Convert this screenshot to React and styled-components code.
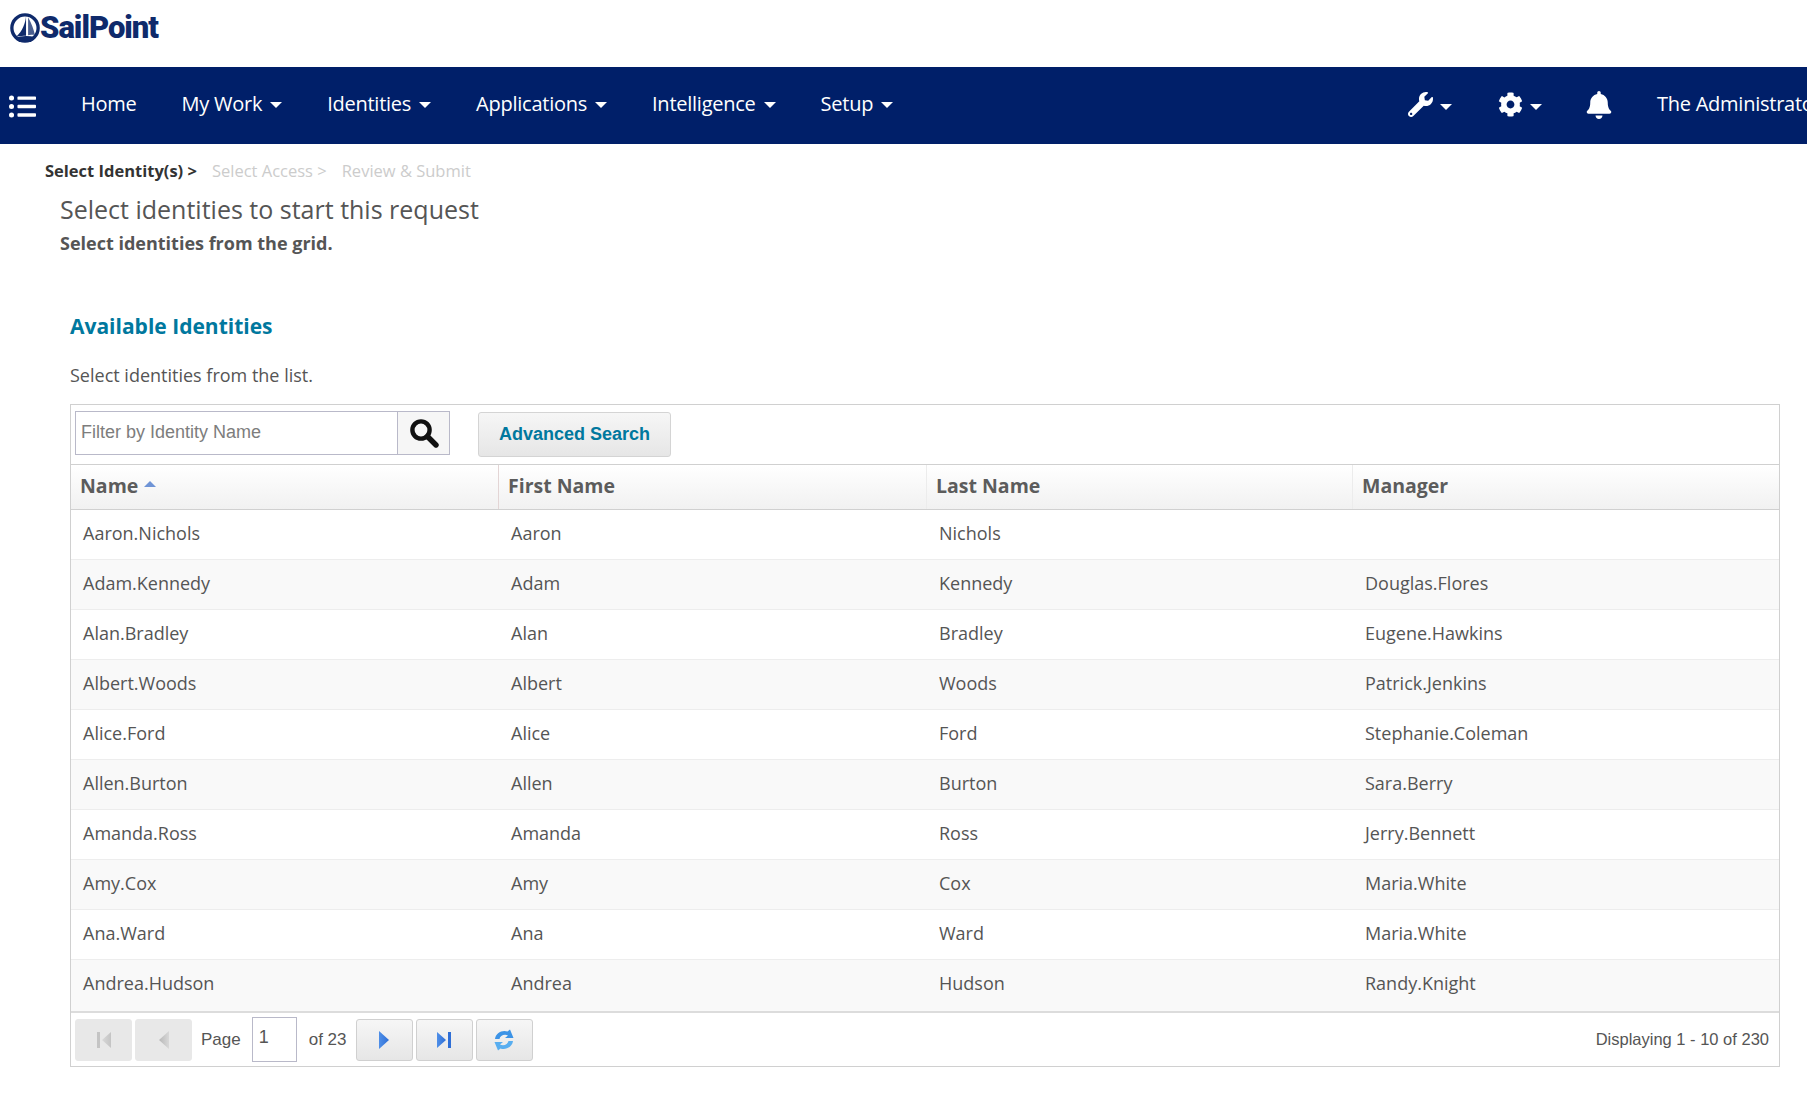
import React from "react";
import styled, { createGlobalStyle } from "styled-components";
import { FaListUl, FaWrench, FaCog, FaBell } from "react-icons/fa";

const GlobalStyle = createGlobalStyle`
  html, body {
    margin: 0;
    padding: 0;
    background: #fff;
    font-family: "Open Sans", "Liberation Sans", sans-serif;
    overflow: hidden;
  }
`;

const Page = styled.div`
  width: 1807px;
  height: 1093px;
  overflow: hidden;
`;

const Brand = styled.div`
  height: 67px;
  display: flex;
  align-items: flex-start;
  padding: 13px 0 0 10px;
  box-sizing: border-box;
`;

const LogoText = styled.span`
  font-family: "Roboto", "Liberation Sans", sans-serif;
  font-weight: 900;
  font-size: 31px;
  line-height: 30px;
  letter-spacing: -1px;
  color: #0f2a6b;
`;

const NavBar = styled.nav`
  height: 77px;
  background: #001f69;
  display: flex;
  align-items: center;
  color: #fff;
  white-space: nowrap;
  font-size: 20px;
  letter-spacing: -0.25px;
  padding: 0 0 5px 9px;
  box-sizing: border-box;
`;

const Burger = styled.span`
  display: flex;
  font-size: 27px;
  margin: 7px 45px 0 0;
`;

const NavItem = styled.span`
  display: flex;
  align-items: center;
  gap: 8px;
  margin-right: 45px;
`;

const Caret = styled.span`
  width: 0;
  height: 0;
  border-left: 6px solid transparent;
  border-right: 6px solid transparent;
  border-top: 6px solid #fff;
  margin-top: 4px;
`;

const NavIcons = styled.div`
  margin-left: auto;
  display: flex;
  align-items: center;
  font-size: 25px;
  flex-shrink: 0;
  width: 399px;
  overflow: hidden;
  box-sizing: border-box;
`;

const IconItem = styled.span`
  display: flex;
  align-items: center;
  gap: 7px;
  margin-right: ${(p) => p.$space}px;
  font-size: ${(p) => p.$size || 25}px;
  padding-top: 3px;
`;

const UserName = styled.span`
  font-size: 20px;
`;

const Crumbs = styled.div`
  display: flex;
  gap: 15px;
  font-size: 16.5px;
  line-height: 22px;
  padding: 16px 0 0 45px;
`;

const Crumb = styled.span`
  color: ${(p) => (p.$active ? "#333" : "#ccc")};
  font-weight: ${(p) => (p.$active ? 700 : 400)};
`;

const Heading = styled.div`
  margin: 10px 0 0 60px;
  font-size: 25px;
  line-height: 34px;
  color: #555;
`;

const SubHeading = styled.div`
  margin: 5px 0 0 60px;
  font-size: 18px;
  line-height: 24px;
  font-weight: 700;
  color: #555;
`;

const Section = styled.div`
  margin: 0 27px 0 70px;
`;

const SectionTitle = styled.div`
  margin-top: 56px;
  font-size: 21px;
  line-height: 30px;
  font-weight: 700;
  color: #00789e;
`;

const SectionHint = styled.div`
  margin-top: 22px;
  font-size: 18px;
  line-height: 24px;
  color: #555;
`;

const Panel = styled.div`
  margin-top: 17px;
  border: 1px solid #d0d0d0;
  height: 663px;
  box-sizing: border-box;
  display: flex;
  flex-direction: column;
`;

const Toolbar = styled.div`
  height: 59px;
  flex: none;
  box-sizing: border-box;
  display: flex;
  align-items: flex-start;
  padding: 6px 0 0 4px;
`;

const SearchBox = styled.div`
  display: flex;
  flex: none;
  width: 375px;
  height: 44px;
  box-sizing: border-box;
  border: 1px solid #b9b9c9;
`;

const SearchInput = styled.input`
  flex: 1;
  min-width: 0;
  border: none;
  outline: none;
  padding: 0 5px 2px;
  font-family: "Liberation Sans", Arial, sans-serif;
  font-size: 18px;
  color: #333;
  &::placeholder {
    color: #7d7d7d;
    opacity: 1;
  }
`;

const SearchButton = styled.span`
  width: 51px;
  border-left: 1px solid #b9b9c9;
  background: #f6f6f6;
  display: flex;
  align-items: center;
  justify-content: center;
`;

const AdvancedButton = styled.button`
  margin: 1px 0 0 28px;
  width: 193px;
  height: 45px;
  border: 1px solid #d4d4d4;
  border-radius: 3px;
  background: linear-gradient(#f6f6f6, #e6e6e6);
  color: #00789e;
  font-family: "Liberation Sans", Arial, sans-serif;
  font-weight: 700;
  font-size: 18px;
  padding: 0;
`;

const Columns = styled.div`
  display: grid;
  grid-template-columns: 428px 428px 426px 1fr;
`;

const HeaderRow = styled(Columns)`
  height: 46px;
  flex: none;
  box-sizing: border-box;
  border-top: 1px solid #d0d0d0;
  border-bottom: 1px solid #d0d0d0;
  background: linear-gradient(#ffffff, #f1f1f1);
`;

const HeaderCell = styled.div`
  display: flex;
  align-items: center;
  gap: 6px;
  padding: 0 0 4px 9px;
  font-size: 19.5px;
  font-weight: 700;
  color: #5c5c5c;
  border-right: 1px solid ${(p) => p.$rule || "transparent"};
`;

const SortArrow = styled.span`
  width: 0;
  height: 0;
  border-left: 6px solid transparent;
  border-right: 6px solid transparent;
  border-bottom: 6px solid #6f94d6;
  margin-bottom: 3px;
`;

const Body = styled.div`
  flex: 1;
  background: #f9f9f9;
`;

const Row = styled(Columns)`
  height: 50px;
  box-sizing: border-box;
  background: ${(p) => (p.$odd ? "#f9f9f9" : "#fff")};
  border-bottom: 1px solid ${(p) => (p.$last ? "transparent" : "#ededed")};
  align-items: center;
  font-size: 18px;
  color: #555;
`;

const Cell = styled.div`
  padding: 0 0 4px 12px;
`;

const Footer = styled.div`
  height: 55px;
  flex: none;
  box-sizing: border-box;
  border-top: 2px solid #dcdcdc;
  display: flex;
  align-items: center;
  padding: 0 10px 0 4px;
  font-family: "Liberation Sans", Arial, sans-serif;
  font-size: 17px;
  color: #555;
`;

const PagerButton = styled.span`
  width: 57px;
  height: 42px;
  flex: none;
  box-sizing: border-box;
  border-radius: 3px;
  border: 1px solid ${(p) => (p.$off ? "#e8e8e8" : "#d0d0d0")};
  background: ${(p) => (p.$off ? "#e8e8e8" : "linear-gradient(#f6f6f6, #e6e6e6)")};
  display: flex;
  align-items: center;
  justify-content: center;
  margin-right: 3px;
`;

const PageLabel = styled.span`
  margin: 0 ${(p) => p.$right}px 0 ${(p) => p.$left}px;
`;

const PageInput = styled.span`
  width: 45px;
  height: 45px;
  box-sizing: border-box;
  border: 1px solid #b9b9c9;
  padding: 9px 0 0 6px;
  font-size: 18px;
  line-height: 20px;
`;

const Displaying = styled.span`
  margin-left: auto;
  font-size: 16.5px;
`;

const Logo = () => (
  <svg width="30" height="30" viewBox="0 0 29 29">
    <circle cx="14.5" cy="14.5" r="12.7" fill="none" stroke="#0f2a6b" strokeWidth="3.2" />
    <path d="M15.5 3 C15 10 12 18 6 23 C10 22 13 22 15.5 22 Z" fill="#0f2a6b" />
    <path d="M17.5 4 C21 10 23 16 24 21 C22 21 19 21 17.5 21.5 Z" fill="#0f2a6b" opacity="0.75" />
    <path d="M5 24 Q14 20.5 25 23.5 L20 28 H9 Z" fill="#0f2a6b" />
  </svg>
);

const SearchGlyph = () => (
  <svg width="30" height="30" viewBox="0 0 30 30">
    <circle cx="12" cy="12" r="8.6" fill="none" stroke="#111" strokeWidth="4.4" />
    <line x1="18.5" y1="18.5" x2="27" y2="27" stroke="#111" strokeWidth="5.4" strokeLinecap="round" />
  </svg>
);

const Tri = ({ dir, bar, color, light }) => {
  const id = `g-${dir}-${bar ? 1 : 0}`;
  return (
    <svg width="16" height="18" viewBox="0 0 16 18">
      <defs>
        <linearGradient id={id} x1="0" x2="1" y1="0" y2="0">
          <stop offset="0" stopColor={light} />
          <stop offset="1" stopColor={color} />
        </linearGradient>
      </defs>
      {dir === "left" ? (
        <path d={bar ? "M15 1 V17 L6 9 Z" : "M13 0 V18 L3 9 Z"} fill={`url(#${id})`} />
      ) : (
        <path d={bar ? "M1 1 V17 L10 9 Z" : "M3 0 V18 L13 9 Z"} fill={`url(#${id})`} />
      )}
      {bar && <rect x={dir === "left" ? 1 : 12} y="1" width="3" height="16" fill={color} />}
    </svg>
  );
};

const Refresh = () => (
  <svg width="22" height="22" viewBox="0 0 22 22">
    <path d="M2 10 C2.5 4.5 9 .5 14.5 2.5 L17 .5 L20.5 9 H12 L15 6.5 C11 4.5 7 7 6.5 10 Z" fill="#3c93e6" />
    <path d="M20 12 C19.5 17.5 13 21.5 7.5 19.5 L5 21.5 L1.5 13 H10 L7 15.5 C11 17.5 15 15 15.5 12 Z" fill="#58aef0" />
  </svg>
);

const rows = [
  ["Aaron.Nichols", "Aaron", "Nichols", ""],
  ["Adam.Kennedy", "Adam", "Kennedy", "Douglas.Flores"],
  ["Alan.Bradley", "Alan", "Bradley", "Eugene.Hawkins"],
  ["Albert.Woods", "Albert", "Woods", "Patrick.Jenkins"],
  ["Alice.Ford", "Alice", "Ford", "Stephanie.Coleman"],
  ["Allen.Burton", "Allen", "Burton", "Sara.Berry"],
  ["Amanda.Ross", "Amanda", "Ross", "Jerry.Bennett"],
  ["Amy.Cox", "Amy", "Cox", "Maria.White"],
  ["Ana.Ward", "Ana", "Ward", "Maria.White"],
  ["Andrea.Hudson", "Andrea", "Hudson", "Randy.Knight"],
];

const App = () => (
  <Page>
    <GlobalStyle />
    <Brand>
      <Logo />
      <LogoText>SailPoint</LogoText>
    </Brand>
    <NavBar>
      <Burger>
        <FaListUl />
      </Burger>
      <NavItem>Home</NavItem>
      <NavItem>My Work <Caret /></NavItem>
      <NavItem>Identities <Caret /></NavItem>
      <NavItem>Applications <Caret /></NavItem>
      <NavItem>Intelligence <Caret /></NavItem>
      <NavItem>Setup <Caret /></NavItem>
      <NavIcons>
        <IconItem $space={46}><FaWrench /><Caret /></IconItem>
        <IconItem $space={43}><FaCog /><Caret /></IconItem>
        <IconItem $space={44} $size={28}><FaBell /></IconItem>
        <UserName>The Administrator</UserName>
      </NavIcons>
    </NavBar>
    <Crumbs>
      <Crumb $active>Select Identity(s) &gt;</Crumb>
      <Crumb>Select Access &gt;</Crumb>
      <Crumb>Review &amp; Submit</Crumb>
    </Crumbs>
    <Heading>Select identities to start this request</Heading>
    <SubHeading>Select identities from the grid.</SubHeading>
    <Section>
      <SectionTitle>Available Identities</SectionTitle>
      <SectionHint>Select identities from the list.</SectionHint>
      <Panel>
        <Toolbar>
          <SearchBox>
            <SearchInput placeholder="Filter by Identity Name" />
            <SearchButton><SearchGlyph /></SearchButton>
          </SearchBox>
          <AdvancedButton>Advanced Search</AdvancedButton>
        </Toolbar>
        <HeaderRow>
          <HeaderCell $rule="#e3d5d5">Name <SortArrow /></HeaderCell>
          <HeaderCell $rule="#ececec">First Name</HeaderCell>
          <HeaderCell $rule="#ececec">Last Name</HeaderCell>
          <HeaderCell>Manager</HeaderCell>
        </HeaderRow>
        <Body>
          {rows.map((row, i) => (
            <Row key={row[0]} $odd={i % 2 === 1} $last={i === rows.length - 1}>
              {row.map((text, j) => (
                <Cell key={j}>{text}</Cell>
              ))}
            </Row>
          ))}
        </Body>
        <Footer>
          <PagerButton $off><Tri dir="left" bar color="#c4c4c4" light="#d8d8d8" /></PagerButton>
          <PagerButton $off><Tri dir="left" color="#d8d8d8" light="#b8b8b8" /></PagerButton>
          <PageLabel $left={6} $right={11}>Page</PageLabel>
          <PageInput>1</PageInput>
          <PageLabel $left={12} $right={9}>of 23</PageLabel>
          <PagerButton><Tri dir="right" color="#2f6fd6" light="#4f8fe8" /></PagerButton>
          <PagerButton><Tri dir="right" bar color="#2f6fd6" light="#4f8fe8" /></PagerButton>
          <PagerButton><Refresh /></PagerButton>
          <Displaying>Displaying 1 - 10 of 230</Displaying>
        </Footer>
      </Panel>
    </Section>
  </Page>
);

export default App;
